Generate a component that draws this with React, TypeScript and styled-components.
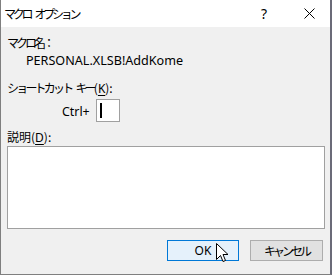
import React from "react";
import styled, { createGlobalStyle } from "styled-components";

const GlobalStyle = createGlobalStyle`
  html, body {
    margin: 0;
    padding: 0;
    background: #f0f0f0;
  }
  body {
    font-family: "Noto Sans", "Noto Sans CJK JP", sans-serif;
    font-size: 12px;
    color: #000;
  }
`;

const Window = styled.div`
  position: relative;
  box-sizing: border-box;
  width: 332px;
  height: 275px;
  background: #f0f0f0;
  border-left: 1px solid #7f7f7f;
  border-right: 2px solid #6b6b78;
  border-bottom: 1px solid #7f7f7f;
  display: flex;
  flex-direction: column;
  overflow: hidden;
`;

const TitleBar = styled.div`
  height: 27px;
  background: #fff;
  display: flex;
  align-items: center;
  padding-left: 3px;
  flex-shrink: 0;
`;

const Title = styled.span`
  flex: 1;
  display: flex;
  gap: 4px;
  font-family: "Noto Sans CJK JP", sans-serif;
  font-size: 12px;
  line-height: 16px;
`;

// Japanese run, condensed to the width of the Windows UI font
const Kana = styled.span<{ $ls: number }>`
  letter-spacing: ${(p) => p.$ls}px;
  font-family: "Noto Sans CJK JP", sans-serif;
`;

const TitleButton = styled.span<{ $w: number }>`
  width: ${(p) => p.$w}px;
  display: flex;
  justify-content: center;
  align-items: center;
  font-family: "Noto Sans", sans-serif;
  font-size: 14px;
`;

const Body = styled.div`
  flex: 1;
  display: flex;
  flex-direction: column;
  padding: 8px 7px 0 6px;
`;

const Label = styled.div<{ $mt: number }>`
  display: flex;
  height: 16px;
  line-height: 16px;
  margin-top: ${(p) => p.$mt}px;
  font-family: "Noto Sans CJK JP", sans-serif;
  font-size: 12px;
  white-space: nowrap;
`;

const Gap = styled.span`
  width: 4px;
`;

const U = styled.span`
  text-decoration: underline;
  text-underline-offset: 2px;
  font-family: "Noto Sans", sans-serif;
`;

const MacroName = styled.div`
  height: 16px;
  line-height: 16px;
  margin-top: 2px;
  margin-left: 19px;
  font-family: "Noto Sans", sans-serif;
  font-size: 12.6px;
`;

const KeyRow = styled.div`
  display: flex;
  align-items: center;
  margin-top: 3px;
  margin-left: 55px;
  height: 23px;
`;

const CtrlText = styled.span`
  font-family: "Noto Sans", sans-serif;
  font-size: 12.4px;
  width: 34px;
  padding-top: 1px;
`;

const KeyBox = styled.div`
  box-sizing: border-box;
  width: 24px;
  height: 23px;
  background: #fff;
  border: 1px solid #a0a0a0;
  display: flex;
  align-items: center;
  padding-left: 3px;
`;

const Caret = styled.div`
  width: 1px;
  height: 15px;
  background: #000;
  border-left: 1px solid #000;
`;

const TextArea = styled.div`
  box-sizing: border-box;
  margin-top: 1px;
  width: 318px;
  height: 83px;
  background: #fff;
  border: 1px solid #a0a0a0;
`;

const ButtonRow = styled.div`
  display: flex;
  justify-content: flex-end;
  gap: 11px;
  margin-top: 11px;
`;

const Button = styled.div<{ $primary?: boolean; $w: number }>`
  box-sizing: border-box;
  width: ${(p) => p.$w}px;
  height: 21px;
  display: flex;
  align-items: center;
  justify-content: center;
  background: ${(p) => (p.$primary ? "#e5f1fb" : "#e1e1e1")};
  border: 1px solid ${(p) => (p.$primary ? "#0078d7" : "#adadad")};
  font-family: "Noto Sans", "Noto Sans CJK JP", sans-serif;
  font-size: 12px;
`;

const Cursor = styled.svg`
  position: absolute;
  left: 215px;
  top: 243px;
`;

export default function App() {
  return (
    <>
      <GlobalStyle />
      <Window>
        <TitleBar>
          <Title>
            <Kana $ls={-3.2}>マクロ</Kana>
            <Kana $ls={-3.2}>オプション</Kana>
          </Title>
          <TitleButton $w={48}>?</TitleButton>
          <TitleButton $w={42}>
            <svg width="11" height="11" viewBox="0 0 11 11">
              <path d="M0.5 0.5 L10.5 10.5 M10.5 0.5 L0.5 10.5" stroke="#000" strokeWidth="1" />
            </svg>
          </TitleButton>
        </TitleBar>
        <Body>
          <Label $mt={0}>
            <Kana $ls={-3}>マクロ名：</Kana>
          </Label>
          <MacroName>PERSONAL.XLSB!AddKome</MacroName>
          <Label $mt={11}>
            <Kana $ls={-2.8}>ショートカット</Kana>
            <Gap />
            <Kana $ls={-2.8}>キー</Kana>
            <span>
              (<U>K</U>):
            </span>
          </Label>
          <KeyRow>
            <CtrlText>Ctrl+</CtrlText>
            <KeyBox>
              <Caret />
            </KeyBox>
          </KeyRow>
          <Label $mt={7}>
            <Kana $ls={0}>説明</Kana>
            <span>
              (<U>D</U>):
            </span>
          </Label>
          <TextArea />
          <ButtonRow>
            <Button $primary $w={72}>
              OK
            </Button>
            <Button $w={73}>
              <Kana $ls={-3}>キャンセル</Kana>
            </Button>
          </ButtonRow>
        </Body>
        <Cursor width="13" height="21" viewBox="0 0 13 21">
          <path
            d="M0.5 0.5 L0.5 16.5 L4.5 12.5 L7 18.5 L9.5 17.5 L7 11.5 L12 11.5 Z"
            fill="#fff"
            stroke="#000"
            strokeWidth="1"
            strokeLinejoin="miter"
          />
        </Cursor>
      </Window>
    </>
  );
}
